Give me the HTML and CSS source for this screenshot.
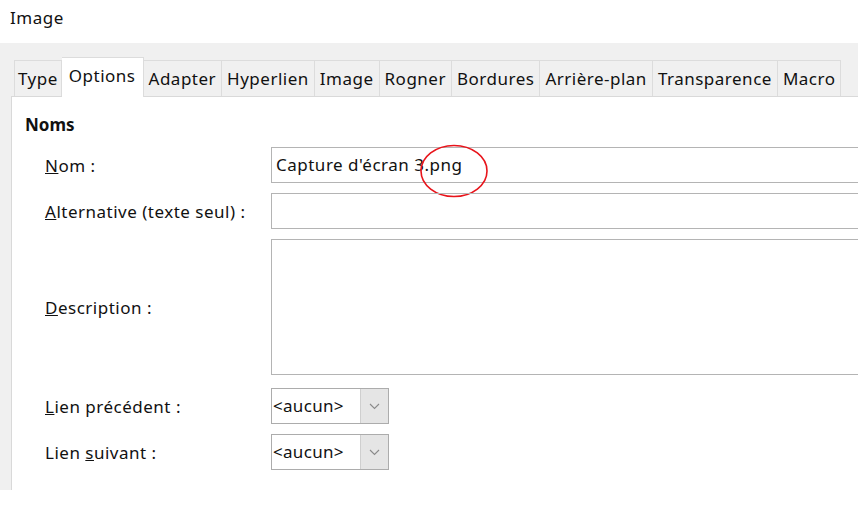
FILE: index.html
```html
<!DOCTYPE html>
<html lang="fr">
<head>
<meta charset="utf-8">
<title>Image</title>
<link rel="stylesheet" href="styles.css">
</head>
<body>
<div class="title">Image</div>
<div class="main">
  <div class="tabs">
    <div class="tab">Type</div>
    <div class="tab active">Options</div>
    <div class="tab">Adapter</div>
    <div class="tab">Hyperlien</div>
    <div class="tab">Image</div>
    <div class="tab">Rogner</div>
    <div class="tab">Bordures</div>
    <div class="tab">Arrière-plan</div>
    <div class="tab">Transparence</div>
    <div class="tab">Macro</div>
  </div>
  <div class="panel">
    <div class="heading">Noms</div>
    <div class="form">
      <div class="label"><span><u>N</u>om :</span></div>
      <div class="field">
        <div class="input">Capture d'écran 3.png</div>
        <svg class="circle" width="76" height="60" viewBox="0 0 76 60"><ellipse cx="38" cy="30" rx="33" ry="25.5" fill="none" stroke="#e8141b" stroke-width="1.6"/></svg>
      </div>
      <div class="label"><span><u>A</u>lternative (texte seul) :</span></div>
      <div class="field"><div class="input"></div></div>
      <div class="label"><span><u>D</u>escription :</span></div>
      <div class="field"><div class="input area"></div></div>
      <div class="label sel-gap"><span><u>L</u>ien précédent :</span></div>
      <div class="field sel-gap">
        <div class="select"><span class="val">&lt;aucun&gt;</span><span class="btn"><svg width="11" height="7" viewBox="0 0 11 7"><path d="M1 1 L5.5 5.5 L10 1" fill="none" stroke="#8a8a8a" stroke-width="1.1"/></svg></span></div>
      </div>
      <div class="label"><span>Lien <u>s</u>uivant :</span></div>
      <div class="field">
        <div class="select"><span class="val">&lt;aucun&gt;</span><span class="btn"><svg width="11" height="7" viewBox="0 0 11 7"><path d="M1 1 L5.5 5.5 L10 1" fill="none" stroke="#8a8a8a" stroke-width="1.1"/></svg></span></div>
      </div>
    </div>
  </div>
</div>
</body>
</html>
```
FILE: styles.css
```css
html, body {
  margin: 0;
  padding: 0;
  background: #ffffff;
  overflow: hidden;
}
body {
  width: 858px;
  height: 513px;
  font-family: "Noto Sans", "Open Sans", "DejaVu Sans", sans-serif;
  font-size: 17px;
  letter-spacing: 0.5px;
  color: #111;
}
.title {
  height: 43px;
  padding-left: 10px;
  line-height: 36px;
  box-sizing: border-box;
}
.main {
  background: #f0f0f0;
  height: 447px;
  padding-left: 11px;
  display: flex;
  flex-direction: column;
}
.tabs {
  display: flex;
  align-items: flex-end;
  padding-top: 14px;
  padding-left: 3px;
  height: 53px;
  box-sizing: border-box;
}
.tab {
  height: 36px;
  box-sizing: border-box;
  border: 1px solid #dcdcdc;
  border-bottom: none;
  border-left: none;
  padding: 0 5px;
  line-height: 35px;
  background: #f0f0f0;
  white-space: nowrap;
}
.tab:first-child {
  border-left: 1px solid #dcdcdc;
  padding: 0 3px;
}
.tab.active {
  background: #ffffff;
  margin-bottom: -1px;
  height: 40px;
  line-height: 36px;
  padding: 0 7px;
  position: relative;
  z-index: 1;
}
.panel {
  flex: 1;
  background: #ffffff;
  border-left: 1px solid #d9d9d9;
  border-top: 1px solid #d9d9d9;
  padding-left: 13px;
}
.heading {
  font-weight: bold;
  letter-spacing: 0;
  padding-top: 16px;
  line-height: 24px;
  height: 50px;
  box-sizing: border-box;
}
.form {
  display: grid;
  grid-template-columns: 226px 1fr;
  row-gap: 10px;
  padding-left: 20px;
}
.label {
  display: flex;
  align-items: center;
  white-space: nowrap;
}
.field {
  position: relative;
  margin-right: -20px;
}
.sel-gap {
  margin-top: 3px;
}
.input {
  height: 36px;
  box-sizing: border-box;
  border: 1px solid #b4b4b4;
  padding-left: 4px;
  line-height: 33px;
  white-space: nowrap;
}
.input.area {
  height: 136px;
}
.circle {
  position: absolute;
  left: 145px;
  top: -6px;
}
.select {
  width: 118px;
  height: 36px;
  box-sizing: border-box;
  border: 1px solid #acacac;
  display: flex;
}
.val {
  flex: 1;
  line-height: 33px;
  padding-left: 1px;
  letter-spacing: 0.3px;
}
.btn {
  width: 27px;
  background: #e5e5e5;
  border-left: 1px solid #cfcfcf;
  display: flex;
  align-items: center;
  justify-content: center;
}
```
